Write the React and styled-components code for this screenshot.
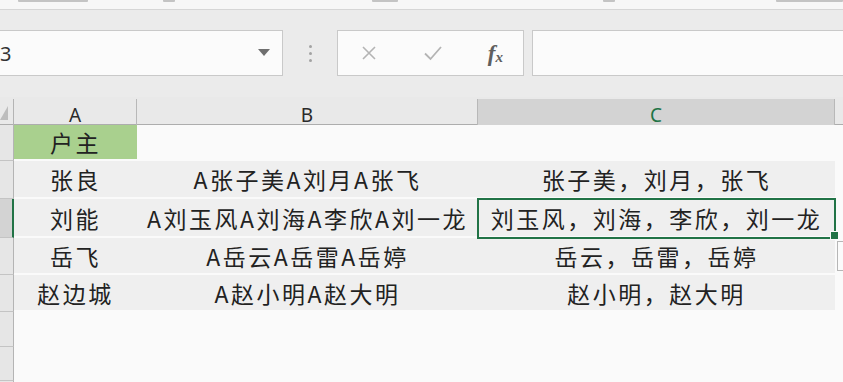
import React from 'react'
import styled, { createGlobalStyle } from 'styled-components'

const GlobalStyle = createGlobalStyle`
  html, body {
    margin: 0;
    padding: 0;
    background: #fafafa;
    overflow: hidden;
  }
  body {
    font-family: "Noto Sans", "Noto Sans CJK SC", sans-serif;
  }
`

const rows = [
  { id: 2, name: '张良', raw: 'A张子美A刘月A张飞', out: '张子美，刘月，张飞', h: 38 },
  { id: 3, name: '刘能', raw: 'A刘玉风A刘海A李欣A刘一龙', out: '刘玉风，刘海，李欣，刘一龙', h: 39, active: true },
  { id: 4, name: '岳飞', raw: 'A岳云A岳雷A岳婷', out: '岳云，岳雷，岳婷', h: 37 },
  { id: 5, name: '赵边城', raw: 'A赵小明A赵大明', out: '赵小明，赵大明', h: 37 },
]

// bits of the ribbon that peek out above the formula bar
const ribbonMarks = [
  { left: 18, w: 70 },
  { left: 163, w: 12 },
  { left: 372, w: 26 },
  { left: 603, w: 12 },
  { left: 776, w: 67 },
]

const App = () => {
  return (
    <>
      <GlobalStyle />
      <Page>
        <RibbonEdge>
          {ribbonMarks.map((m) => (
            <Mark key={m.left} style={{ left: m.left, width: m.w }} />
          ))}
        </RibbonEdge>

        <FormulaBar>
          <NameBox>
            <NameText>3</NameText>
            <DropArrow />
          </NameBox>
          <Grip>
            <Dot />
            <Dot />
            <Dot />
          </Grip>
          <FxButtons>
            <svg width="18" height="18" viewBox="0 0 18 18">
              <path d="M3 3 L15 15 M15 3 L3 15" stroke="#b4b4b4" strokeWidth="1.6" fill="none" />
            </svg>
            <svg width="20" height="18" viewBox="0 0 20 18">
              <path d="M2 9.5 L7.5 15 L18 3" stroke="#b4b4b4" strokeWidth="1.8" fill="none" />
            </svg>
            <Fx>
              f<sub>x</sub>
            </Fx>
          </FxButtons>
          <FormulaInput />
        </FormulaBar>

        <Sheet>
          <HeadRow>
            <Corner>
              <SelectAll />
            </Corner>
            <ColHead>A</ColHead>
            <ColHead>B</ColHead>
            <ColHead $active>C</ColHead>
            <ColFill />
          </HeadRow>

          <Row $h={36}>
            <RowHead />
            <Cell $bg="#a9d08e">户主</Cell>
            <Cell $bg="#fafafa" />
            <Cell $bg="#fafafa" />
            <Tail />
          </Row>

          {rows.map((r) => (
            <Row key={r.id} $h={r.h}>
              <RowHead $active={r.active} />
              <Cell>{r.name}</Cell>
              <Cell>{r.raw}</Cell>
              <Cell $selected={r.active}>
                {r.out}
                {r.active && <FillHandle />}
                {r.active && <QuickButton />}
              </Cell>
              <Tail />
            </Row>
          ))}

          <Row $h={35}>
            <RowHead />
            <Blank />
          </Row>
          <Row $h={34}>
            <RowHead />
            <Blank />
          </Row>
          <Row $h={32}>
            <RowHead />
            <Blank />
          </Row>
        </Sheet>
      </Page>
    </>
  )
}

export default App

const Page = styled.div`
  width: 843px;
  height: 382px;
  overflow: hidden;
  background: #fafafa;
`

const RibbonEdge = styled.div`
  position: relative;
  height: 9px;
  background: #f7f7f7;
  border-bottom: 1px solid #d6d6d6;
  overflow: hidden;
`

const Mark = styled.div`
  position: absolute;
  top: 0;
  height: 2px;
  background: #c4c4c4;
  border-radius: 0 0 1px 1px;
`

const FormulaBar = styled.div`
  height: 87px;
  background: #ebebeb;
  display: flex;
  align-items: flex-start;
  padding-top: 20px;
  box-sizing: border-box;
`

const NameBox = styled.div`
  width: 283px;
  height: 46px;
  box-sizing: border-box;
  background: #fbfbfb;
  border: 1px solid #c9c9c9;
  border-left: none;
  display: flex;
  align-items: center;
  justify-content: space-between;
  padding-right: 12px;
  overflow: hidden;
`

const NameText = styled.div`
  font-family: "Noto Sans", sans-serif;
  font-size: 20px;
  color: #333;
  margin-left: 0;
`

const DropArrow = styled.div`
  width: 0;
  height: 0;
  border-left: 6px solid transparent;
  border-right: 6px solid transparent;
  border-top: 7px solid #6f6f6f;
  margin-top: -2px;
`

const Grip = styled.div`
  width: 54px;
  height: 46px;
  display: flex;
  flex-direction: column;
  align-items: center;
  justify-content: center;
  gap: 4px;
`

const Dot = styled.div`
  width: 3px;
  height: 3px;
  border-radius: 50%;
  background: #a3a3a3;
`

const FxButtons = styled.div`
  width: 187px;
  height: 46px;
  box-sizing: border-box;
  background: #fbfbfb;
  border: 1px solid #c9c9c9;
  display: flex;
  align-items: center;
  justify-content: space-between;
  padding: 0 20px 0 22px;
`

const Fx = styled.div`
  font-family: "Liberation Serif", serif;
  font-style: italic;
  font-weight: bold;
  font-size: 23px;
  color: #5f5f5f;
  line-height: 1;

  sub {
    font-size: 15px;
    vertical-align: -1px;
  }
`

const FormulaInput = styled.div`
  flex: 1;
  height: 46px;
  box-sizing: border-box;
  margin-left: 8px;
  background: #fbfbfb;
  border: 1px solid #c9c9c9;
  border-right: none;
`

const Sheet = styled.div`
  display: flex;
  flex-direction: column;
`

const gridCols = `14px 123px 341px 357px 1fr`

const HeadRow = styled.div`
  display: grid;
  grid-template-columns: ${gridCols};
  height: 28px;
  background: #e9e9e9;
  border-bottom: 1px solid #adadad;
  box-sizing: border-box;
`

const Corner = styled.div`
  position: relative;
  border-right: 1px solid #b4b4b4;
  margin-top: 2px;
`

const SelectAll = styled.div`
  position: absolute;
  left: 0;
  top: 7px;
  width: 0;
  height: 0;
  border-left: 8px solid transparent;
  border-bottom: 14px solid #bdbdbd;
`

const ColHead = styled.div`
  display: flex;
  align-items: center;
  justify-content: center;
  font-family: "Noto Sans", sans-serif;
  font-size: 19px;
  color: ${(p) => (p.$active ? '#217346' : '#2a2a2a')};
  background: ${(p) => (p.$active ? '#d3d3d3' : 'transparent')};
  border-right: 1px solid #b8b8b8;
  border-bottom: ${(p) => (p.$active ? '3px solid #217346' : 'none')};
  margin-top: 2px;
  padding-top: ${(p) => (p.$active ? '3px' : '0')};
  box-sizing: border-box;
  margin-bottom: ${(p) => (p.$active ? '-1px' : '0')};
`

const ColFill = styled.div``

const Row = styled.div`
  display: grid;
  grid-template-columns: ${gridCols};
  height: ${(p) => p.$h}px;
`

const RowHead = styled.div`
  background: ${(p) => (p.$active ? '#d3d3d3' : '#e6e6e6')};
  border-right: ${(p) => (p.$active ? '2px solid #217346' : '1px solid #b4b4b4')};
  border-bottom: 1px solid #c4c4c4;
  box-sizing: border-box;
`

const Cell = styled.div`
  position: relative;
  display: flex;
  align-items: center;
  justify-content: center;
  white-space: nowrap;
  background: ${(p) => p.$bg || '#efefef'};
  border-bottom: 2px solid #fafafa;
  font-family: "Noto Sans CJK SC", sans-serif;
  font-size: 23px;
  letter-spacing: 2.5px;
  color: #222;
  outline: ${(p) => (p.$selected ? '2px solid #217346' : 'none')};
  outline-offset: -1px;
  z-index: ${(p) => (p.$selected ? 2 : 0)};
`

const Tail = styled.div`
  background: #fafafa;
`

const Blank = styled.div`
  grid-column: 2 / -1;
  background: #fafafa;
`

const FillHandle = styled.div`
  position: absolute;
  right: -4px;
  bottom: -4px;
  width: 7px;
  height: 7px;
  background: #217346;
  border: 1px solid #fafafa;
`

const QuickButton = styled.div`
  position: absolute;
  left: calc(100% + 2px);
  top: calc(100% + 5px);
  width: 22px;
  height: 28px;
  background: #fbfbfb;
  border: 1px solid #b6b6b6;
`
